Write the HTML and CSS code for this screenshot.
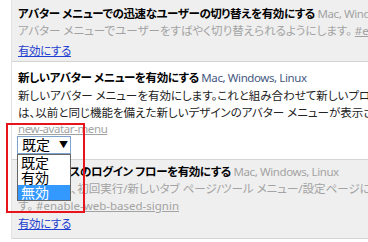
FILE: index.html
```html
<!DOCTYPE html>
<html lang="ja">
<head>
    <meta charset="UTF-8">
    <meta name="viewport" content="width=device-width, initial-scale=1.0">
    <title>試験運用機能</title>
    <link rel="stylesheet" href="styles.css">
</head>
<body>

    <div class="experiments">
        <div class="experiment unsupported first">
            <div class="title"><span class="name">アバター メニューでの迅速なユーザーの切り替えを有効にする</span> <span class="platforms">Mac, Windows, Linux</span></div>
            <div class="desc">アバター メニューでユーザーをすばやく切り替えられるようにします。 <a class="perma" href="#enable-fast-user-switching">#enable-fast-user-switching</a></div>
            <a class="enable" href="#">有効にする</a>
        </div>

        <div class="experiment supported">
            <div class="title"><span class="name">新しいアバター メニューを有効にする</span> <span class="platforms">Mac, Windows, Linux</span></div>
            <div class="desc">新しいアバター メニューを有効にします。これと組み合わせて新しいプロフィール管理システムを有効にした場合<br>は、以前と同じ機能を備えた新しいデザインのアバター メニューが表示されます。</div>
            <a class="perma anchor" href="#new-avatar-menu">new-avatar-menu</a>
            <div class="select-wrap">
                <div class="select">既定<span class="arrow">▼</span></div>
                <!-- open dropdown list -->
                <ul class="dropdown">
                    <li>既定</li>
                    <li>有効</li>
                    <li class="selected">無効</li>
                </ul>
            </div>
        </div>

        <div class="experiment unsupported">
            <div class="title"><span class="name">ウェブベースのログイン フローを有効にする</span> <span class="platforms">Mac, Windows, Linux</span></div>
            <div class="desc">利用すると、初回実行/新しいタブ ページ/ツール メニュー/設定ページにおけるログイン フローがウェブベースになりま<br>す。 <a class="perma" href="#enable-web-based-signin">#enable-web-based-signin</a></div>
            <a class="enable" href="#">有効にする</a>
        </div>
    </div>

    <div class="highlight"></div>

</body>
</html>
```

FILE: styles.css
```css
body {
    margin: 0;
    background: #fff;
    font-family: "Noto Sans", "Noto Sans CJK JP", sans-serif;
    font-size: 11.5px;
    line-height: 17px;
    letter-spacing: -0.4px;
    color: #222;
    overflow: hidden;
    font-feature-settings: "palt";
}
.experiments {
    margin-left: 11px;
    width: 800px;
    border-left: 1px solid #e2e2e2;
}
.experiment {
    padding: 3px 0 6px 6px;
    border-bottom: 1px solid #d4d4d4;
    white-space: nowrap;
}
.first {
    padding-top: 5px;
    padding-bottom: 2px;
}
.first .enable {
    margin-top: 3px;
}
.supported {
    padding-top: 7px;
    padding-bottom: 5px;
}
.supported .desc {
    margin-top: 1px;
}
.desc {
    letter-spacing: 0;
}
.unsupported {
    background-color: #efefef;
    color: #a3a3a3;
}
.name {
    font-weight: bold;
    color: #000;
}
.platforms {
    color: #45587f;
}
.unsupported .platforms {
    color: #a3a3a3;
}
.perma {
    color: #a3a3a3;
    text-decoration: underline;
}
.anchor {
    display: block;
    line-height: 15px;
}
.enable {
    display: inline-block;
    margin-top: 1px;
    color: #1f3fd0;
    text-decoration: underline;
}
.select-wrap {
    position: relative;
    width: 54px;
    margin-left: -1px;
}
.select {
    height: 16px;
    border: 1px solid #7fa3cf;
    background: #fff;
    color: #000;
    font-size: 14px;
    line-height: 16px;
    letter-spacing: 0;
    padding-left: 4px;
}
.arrow {
    position: absolute;
    left: 42px;
    top: 1px;
    font-size: 9px;
}
.dropdown {
    position: absolute;
    top: 18px;
    left: 0;
    width: 52px;
    margin: 0;
    padding: 0;
    list-style: none;
    background: #fff;
    border: 1px solid #666;
    color: #000;
    font-size: 14px;
    line-height: 15px;
    letter-spacing: 0;
    z-index: 2;
}
.dropdown li {
    padding-left: 3px;
}
.dropdown .selected {
    background-color: #3399ff;
    color: #fff;
}
.highlight {
    position: absolute;
    left: 6px;
    top: 123px;
    width: 75px;
    height: 86px;
    border: 2px solid #e8141b;
    z-index: 3;
}
```
